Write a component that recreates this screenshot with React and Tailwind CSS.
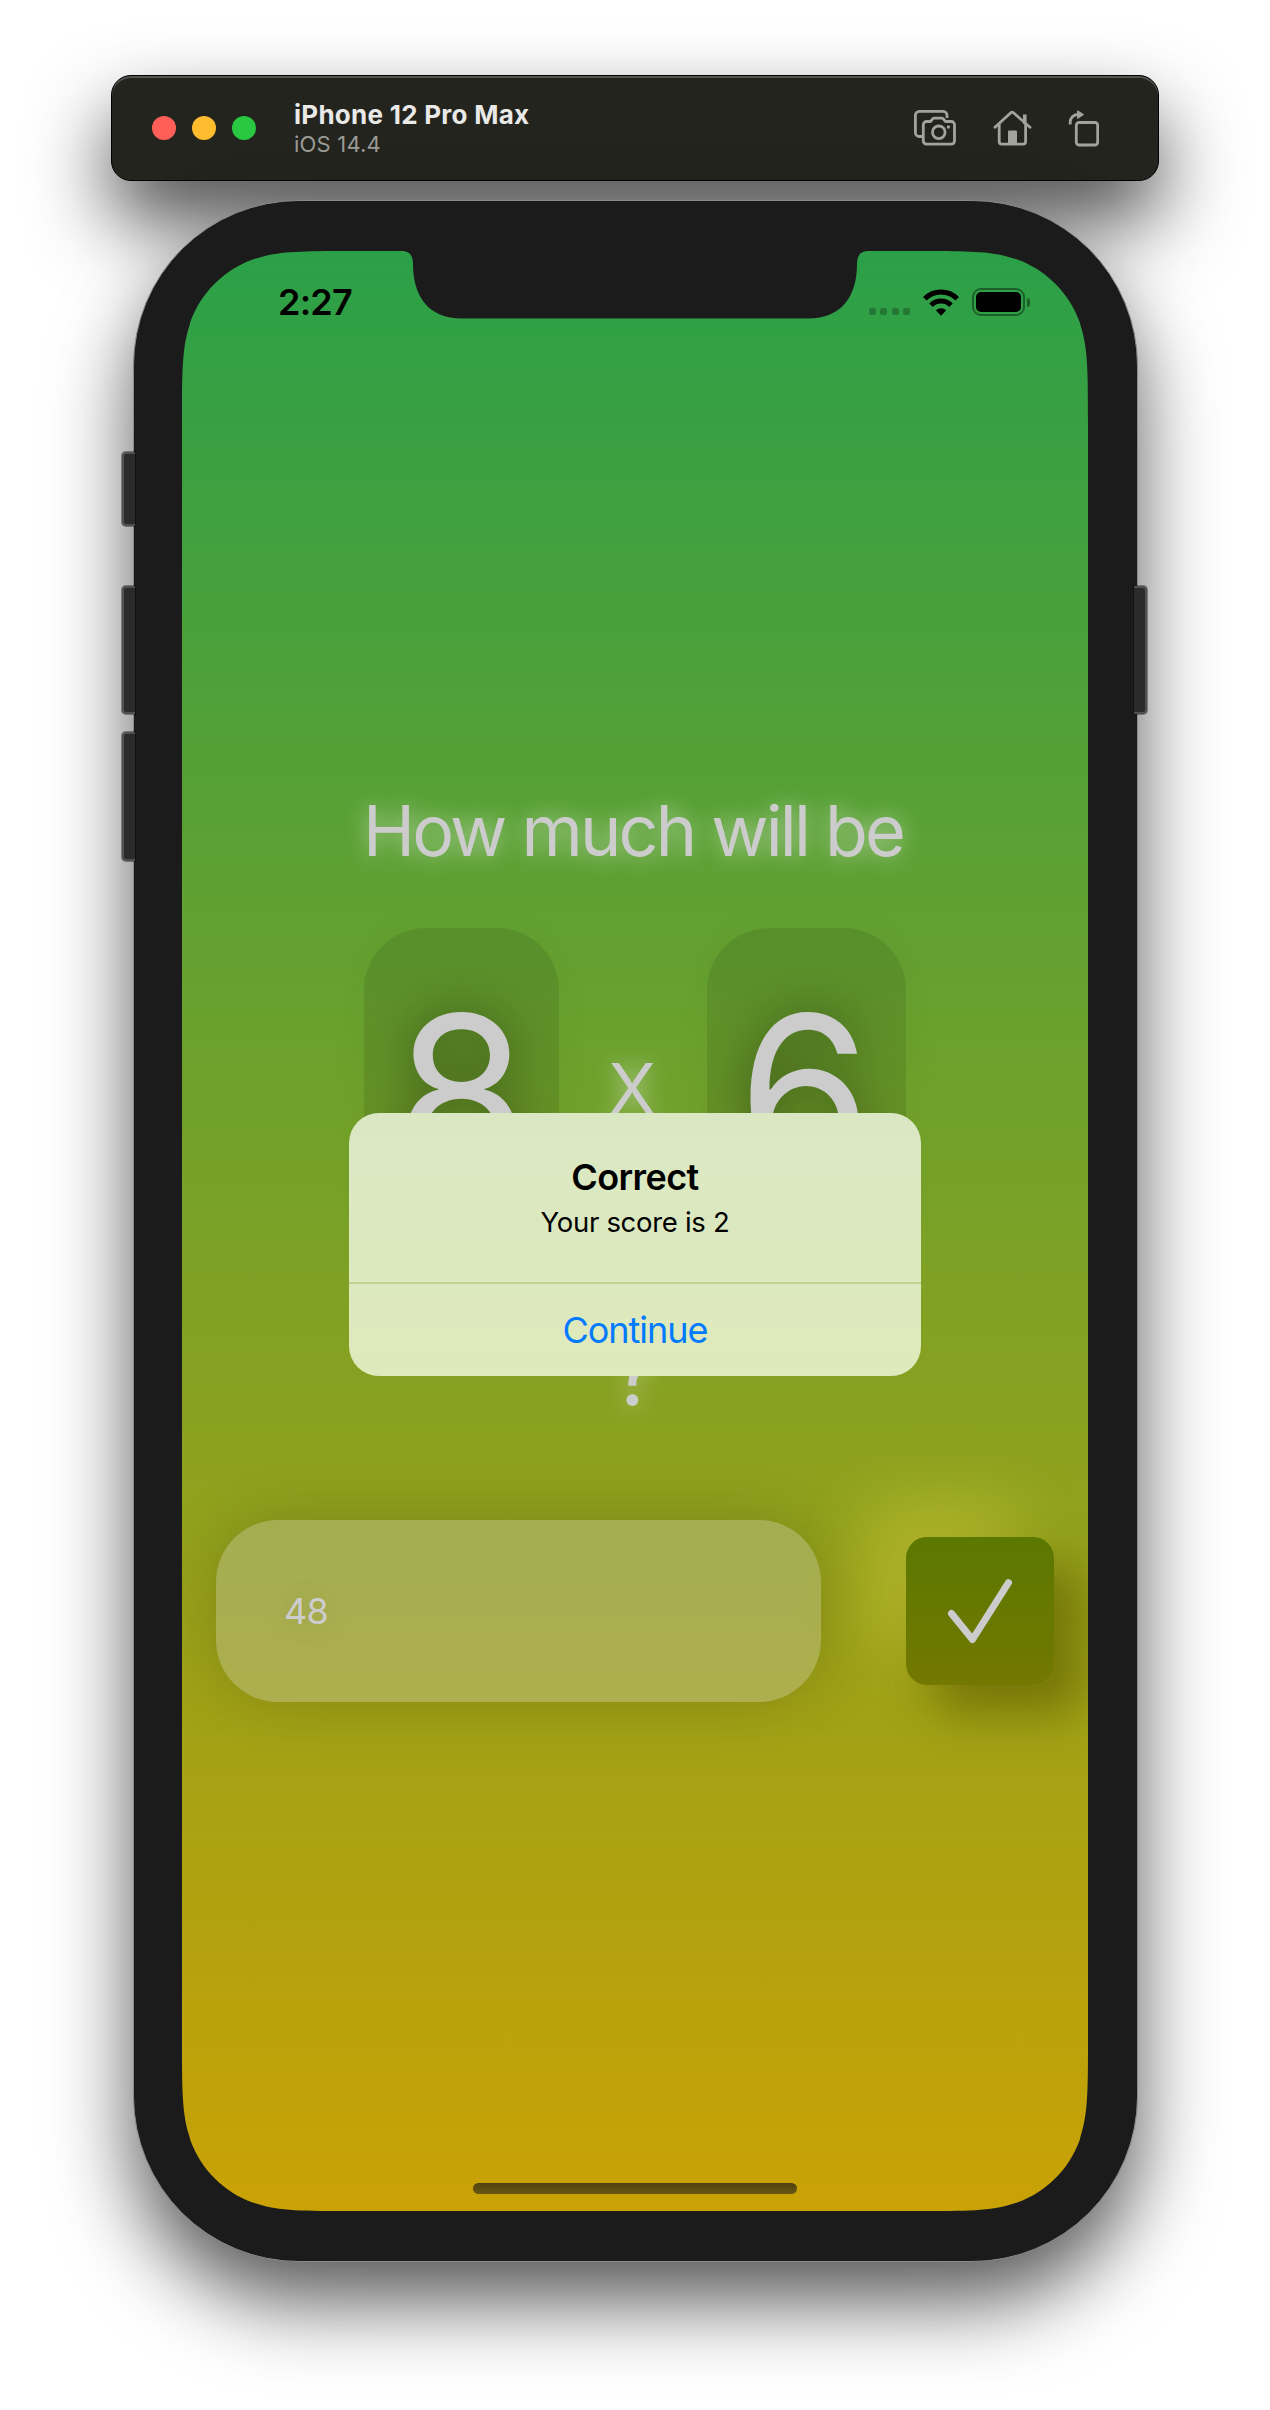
const cubic = (...p) => "C" + p.map((n) => n.toFixed(2)).join(" ");

// Corner profile: points run from the horizontal edge to the vertical edge, in units of the radius.
const SMOOTH = [
  [1.52866, 0], [1.08849, 0], [0.86841, 0], [0.66993, 0.0655],
  [0.63149, 0.07491], [0.37282, 0.16906], [0.16906, 0.37282], [0.07491, 0.63149],
  [0.0655, 0.66993], [0, 0.86841], [0, 1.08849], [0, 1.52866],
];

function corner(profile, r, map, reverse) {
  const pts = (reverse ? [...profile].reverse() : profile).map(([a, b]) => map(a * r, b * r));
  let d = `L${pts[0].join(" ")}`;
  for (let i = 0; i < 12; i += 4) {
    if (i) d += `L${pts[i].join(" ")}`;
    d += cubic(...pts[i + 1], ...pts[i + 2], ...pts[i + 3]);
  }
  return d;
}

function shape(w, h, r, profile, top = "") {
  const tr = corner(profile, r, (a, b) => [w - a, b], false);
  const br = corner(profile, r, (a, b) => [w - a, h - b], true);
  const bl = corner(profile, r, (a, b) => [a, h - b], false);
  const tl = corner(profile, r, (a, b) => [a, b], true);
  return `path("M${profile[0][0] * r} 0${top}${tr}${br}${bl}${tl}Z")`;
}

const NOTCH =
  "L219 0C228 0 231 5 231 13C231 45 246 67.5 280 67.5L626 67.5C660 67.5 675 45 675 13C675 5 678 0 687 0";

const screenClip = { clipPath: shape(906, 1960, 112, SMOOTH, NOTCH) };

function CameraIcon() {
  return (
    <svg width="43" height="36" viewBox="0 0 43 36" fill="none" stroke="#a3a39e" strokeWidth="2.8" strokeLinejoin="round">
      <path d="M8 26.500H5.400a4 4 0 0 1-4-4V5.400a4 4 0 0 1 4-4H29a4 4 0 0 1 4 4V8" />
      <path d="M12.500 11.500H16.500l2.200-2.600a2 2 0 0 1 1.500-.7h7.600a2 2 0 0 1 1.500.7L31.500 11.500h5.800a3.200 3.200 0 0 1 3.200 3.200V31a3.200 3.200 0 0 1-3.200 3.200H12.500A3.200 3.200 0 0 1 9.300 31V14.700a3.200 3.200 0 0 1 3.200-3.200Z" />
      <circle cx="24.800" cy="22.300" r="6.300" />
      <circle cx="34.400" cy="17" r="1.700" fill="#a3a39e" stroke="none" />
    </svg>
  );
}

function HomeIcon() {
  return (
    <svg width="39" height="36" viewBox="0 0 39 36" fill="none" stroke="#a3a39e" strokeWidth="2.800" strokeLinecap="round" strokeLinejoin="round">
      <path d="M2 17.300L17.800 2.800a2 2 0 0 1 2.700 0L37 17.300" />
      <path d="M6.200 14.500V31.500a2.600 2.600 0 0 0 2.600 2.600H30a2.600 2.600 0 0 0 2.600-2.600V14.500" />
      <path d="M31.800 14V4.500" strokeWidth="3.600" strokeLinecap="butt" />
      <path d="M15 34V21.500a1 1 0 0 1 1-1h7a1 1 0 0 1 1 1V34Z" fill="#a3a39e" stroke="none" />
    </svg>
  );
}

function RotateIcon() {
  return (
    <svg width="31" height="37" viewBox="0 0 31 37" fill="none" stroke="#a3a39e" strokeWidth="2.800">
      <rect x="8.300" y="12.500" width="21.400" height="22.500" rx="2.800" />
      <path d="M2.200 14.500V12a7.500 7.500 0 0 1 7.500-7.500h1" />
      <path d="M9.600 .8L15.600 4.600L9.600 8.400Z" fill="#a3a39e" strokeWidth="1" strokeLinejoin="round" />
    </svg>
  );
}

function WifiIcon() {
  return (
    <svg width="36" height="27" viewBox="0 0 36 27" fill="none" stroke="#000" strokeWidth="5">
      <path d="M1.800 9.800a22.800 22.800 0 0 1 32.400 0" />
      <path d="M8 16.200a14 14 0 0 1 20 0" />
      <path d="M18 26.800l-5.200-5.500a7.400 7.400 0 0 1 10.400 0Z" fill="#000" stroke="none" />
    </svg>
  );
}

function SimulatorBar() {
  return (
    <header className="flex h-[106px] w-[1048px] items-center rounded-[20px] border border-black bg-[#24241f] pl-[40px] pr-[59px] shadow-[0_40px_80px_rgba(0,0,0,0.7),inset_0_2px_0_rgba(255,255,255,0.22)]">
      <div className="flex gap-4">
        <span className="size-6 rounded-full bg-[#ff5f57]" />
        <span className="size-6 rounded-full bg-[#febc2e]" />
        <span className="size-6 rounded-full bg-[#28c840]" />
      </div>
      <div className="ml-[38px] mt-[2px] flex-1">
        <div className="text-[26px] font-bold leading-[30px] tracking-[0.26px] text-[#e9e9e7]">iPhone 12 Pro Max</div>
        <div className="text-[22px] leading-[28px] tracking-[0.2px] text-[#9b9b96]">iOS 14.4</div>
      </div>
      <div className="flex items-center gap-[36px]">
        <CameraIcon />
        <HomeIcon />
        <RotateIcon />
      </div>
    </header>
  );
}

function SideButton({ className }) {
  return (
    <span className={`absolute w-[13px] border-2 border-[#505050] bg-[#2b2b2b] shadow-[0_0_0_1px_rgba(0,0,0,0.35)] ${className}`} />
  );
}

function StatusBar() {
  return (
    <div className="flex h-[102px] items-center justify-between pl-[96px] pr-[58px]">
      <div className="text-[36px] font-semibold leading-none tracking-[-0.8px] text-black">2:27</div>
      <div className="flex items-center">
        <div className="mr-[13px] mt-[18px] flex gap-[4.500px]">
          <i className="size-[7px] rounded-[2px] bg-black/25" />
          <i className="size-[7px] rounded-[2px] bg-black/25" />
          <i className="size-[7px] rounded-[2px] bg-black/25" />
          <i className="size-[7px] rounded-[2px] bg-black/25" />
        </div>
        <WifiIcon />
        <div className="ml-[13px] flex h-[28px] w-[53px] rounded-[9px] border-2 border-black/40 p-[2px]">
          <div className="flex-1 rounded-[5px] bg-black" />
        </div>
        <div className="ml-[2px] h-[9px] w-[3px] rounded-r-full bg-black/40" />
      </div>
    </div>
  );
}

function NumberCard({ value, className }) {
  return (
    <div className={`flex h-[321px] justify-center rounded-[62px] bg-black/10 pt-[38px] text-[215px] leading-[254px] text-[#ccc] shadow-[0_0_42px_rgba(0,0,0,0.03)] [text-shadow:0_0_46px_rgba(0,0,0,0.4)] ${className}`}>
      {value}
    </div>
  );
}

function Alert() {
  return (
    <div role="dialog" className="absolute left-[167px] top-[862px] flex h-[263px] w-[572px] flex-col overflow-hidden rounded-[30px] bg-linear-to-b/srgb from-[#dae7c3] via-[#dce9bf] to-[#dfe9bb] text-center">
      <div className="flex h-[171px] flex-col items-center border-b-2 border-[#c3d195] pt-[42px]">
        <h2 className="text-[36px] font-semibold leading-[44px] tracking-[-0.6px] text-black">Correct</h2>
        <p className="mt-[6px] text-[27.500px] leading-[34px] tracking-[-0.3px] text-black">Your score is 2</p>
      </div>
      <button className="flex-1 text-[36px] leading-none tracking-[-1px] text-[#007aff]">Continue</button>
    </div>
  );
}

function Screen() {
  return (
    <main style={screenClip} className="relative flex h-[1960px] w-[906px] flex-col bg-linear-to-b/srgb from-[#2ba048] to-[#caa205]">
      <StatusBar />
      <h1 className="mt-[436px] pr-[4px] text-center text-[70px] leading-[84px] tracking-[-2.800px] text-[#ccc] [text-shadow:0_0_22px_rgba(255,255,255,0.55)]">
        How much will be
      </h1>
      <div className="mt-[55px] flex items-start px-[182px]">
        <NumberCard value="8" className="w-[195px]" />
        <div className="flex-1 pr-[2px] pt-[119px] text-center text-[70px] leading-[84px] text-[#ccc] [text-shadow:0_0_22px_rgba(255,255,255,0.55)]">
          <span className="inline-block">X</span>
        </div>
        <NumberCard value="6" className="w-[199px] pr-[4px]" />
      </div>
      <div className="mt-[60px] pr-[1px] text-center text-[90px] leading-[128px] text-[#ccc] [text-shadow:0_0_22px_rgba(255,255,255,0.45)]">?</div>
      <div className="mt-[83px] flex items-center justify-between px-[34px]">
        <div className="flex h-[182px] w-[605px] items-center rounded-[62px] bg-[#ccc]/30 pl-[68px] text-[36px] tracking-[-0.8px] text-[#ccc] shadow-[0_0_64px_rgba(0,0,0,0.17)] [text-shadow:0_0_42px_rgba(0,0,0,0.15)]">
          48
        </div>
        <button className="flex size-[148px] items-center justify-center rounded-[21px] bg-linear-to-b/srgb from-[#5b7800] to-[#737800] shadow-[28px_28px_46px_rgba(96,96,0,0.65),-38px_-38px_64px_rgba(204,200,60,0.47)]">
          <svg width="66" height="66" viewBox="0 0 66 66" fill="none" stroke="#ccc" strokeWidth="7" strokeLinecap="round" strokeLinejoin="round">
            <path d="M4.500 35.500L25.500 61.500L61.500 4.700" />
          </svg>
        </button>
      </div>
      <div className="mx-auto mb-[17px] mt-auto h-[11px] w-[324px] rounded-full bg-linear-to-b/srgb from-[#504210] to-[#6a5710]" />
      <Alert />
    </main>
  );
}

export default function App() {
  return (
    <div className="flex h-[2410px] w-[1270px] flex-col items-center overflow-hidden bg-white pt-[75px] font-[Inter,sans-serif]">
      <SimulatorBar />
      <div className="relative mt-[19px] flex h-[2062px] w-[1005px] items-center justify-center rounded-[166px] border-[1.500px] border-[#8a8a8a] bg-[#1b1b1b] shadow-[0_40px_80px_rgba(0,0,0,0.65)]">
        <Screen />
        <SideButton className="left-[-12px] top-[251px] h-[74px] rounded-l-[4px] border-r-0" />
        <SideButton className="left-[-12px] top-[385px] h-[128px] rounded-l-[4px] border-r-0" />
        <SideButton className="left-[-12px] top-[531px] h-[129px] rounded-l-[4px] border-r-0" />
        <SideButton className="right-[-10px] top-[385px] h-[128px] rounded-r-[4px] border-l-0" />
      </div>
    </div>
  );
}
